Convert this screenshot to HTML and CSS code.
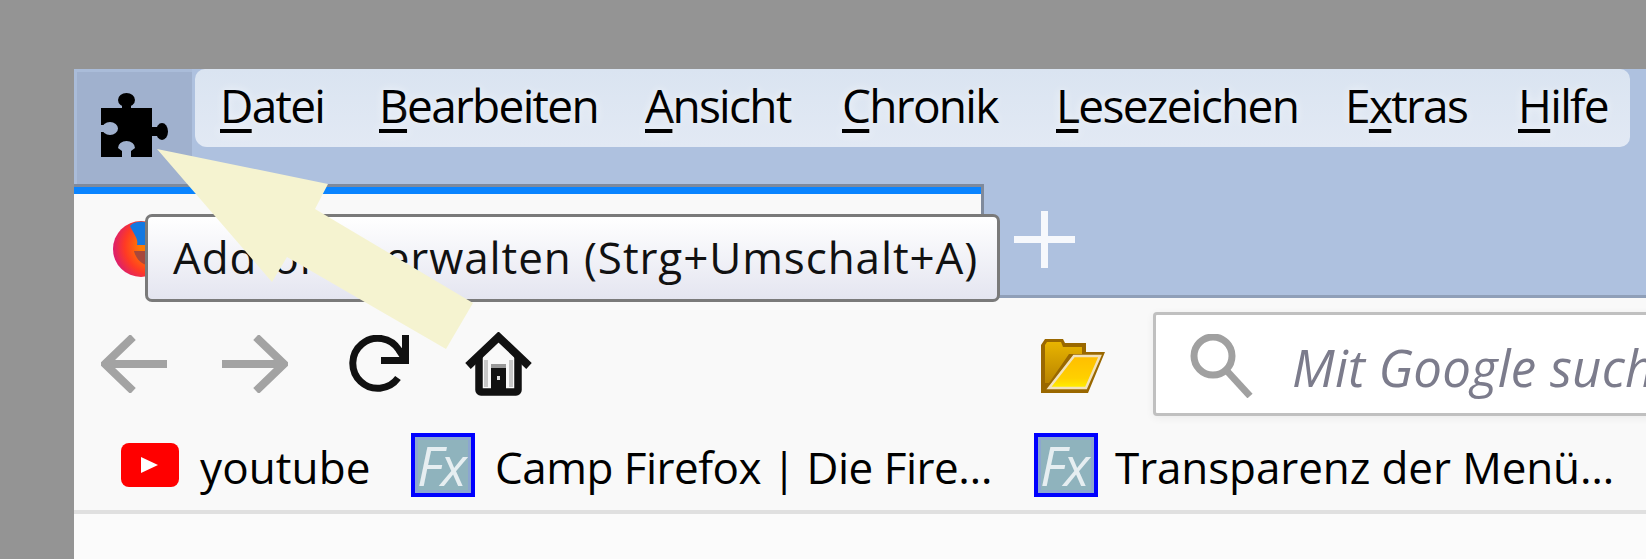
FILE: index.html
```html
<!DOCTYPE html>
<html lang="de">
<head>
  <meta charset="UTF-8" />
  <title>Add-ons verwalten</title>
  <link rel="stylesheet" href="styles.css">
</head>
<body>
  <div class="browser">
    <div class="titlebar">
      <div class="menu-row">
        <div class="addon-box">
          <svg class="puzzle" viewBox="0 0 67 64">
            <rect y="15" width="51" height="49" fill="#000"/>
            <ellipse cx="25.500" cy="7" rx="8.500" ry="7" fill="#000"/>
            <rect x="21" y="10" width="9" height="8" fill="#000"/>
            <ellipse cx="61" cy="38.500" rx="6" ry="8.500" fill="#000"/>
            <rect x="50" y="34" width="8" height="9" fill="#000"/>
            <ellipse cx="9" cy="35.500" rx="8" ry="6.500" fill="#a0b1ce"/>
            <rect y="32" width="6" height="7" fill="#a0b1ce"/>
            <path d="M17 55 A8.500 7 0 0 1 34 55 L30 58 V64 H21 V58 Z" fill="#a0b1ce"/>
          </svg>
        </div>
        <div class="menu-bar">
          <span class="menu-item"><u>D</u>atei</span>
          <span class="menu-item"><u>B</u>earbeiten</span>
          <span class="menu-item"><u>A</u>nsicht</span>
          <span class="menu-item"><u>C</u>hronik</span>
          <span class="menu-item"><u>L</u>esezeichen</span>
          <span class="menu-item">E<u>x</u>tras</span>
          <span class="menu-item"><u>H</u>ilfe</span>
        </div>
      </div>
      <div class="tab-row">
        <div class="tab">
          <div class="tab-line"></div>
          <div class="tab-body">
            <svg class="tab-icon" viewBox="0 0 60 56">
              <defs>
                <radialGradient id="foxFill" cx="0.7" cy="0.45" r="0.7">
                  <stop offset="0.3" stop-color="#ff7a00"/>
                  <stop offset="0.7" stop-color="#ff3a24"/>
                  <stop offset="1" stop-color="#dc1f6e"/>
                </radialGradient>
              </defs>
              <circle cx="29" cy="28" r="28" fill="url(#foxFill)"/>
              <path d="M18 5 C22 0 30 0 36 2 V24 H25 C27 18 21 12 18 5 Z" fill="#1478e0"/>
              <path d="M22 30 H36 V44 C30 44 24 38 22 30 Z" fill="#a8483c"/>
            </svg>
          </div>
        </div>
        <svg class="new-tab" viewBox="0 0 61 57">
          <path d="M30.500 0 V57 M0 28.500 H61" stroke="#f6f8fc" stroke-width="7" fill="none"/>
        </svg>
      </div>
    </div>

    <div class="toolbar">
      <svg class="nav-icon" viewBox="0 0 66 58">
        <path d="M32 2 L4 29 L32 56 M4 29 H66" stroke="#a3a3a3" stroke-width="8" fill="none"/>
      </svg>
      <svg class="nav-icon forward" viewBox="0 0 66 58">
        <path d="M34 2 L62 29 L34 56 M62 29 H0" stroke="#a3a3a3" stroke-width="8" fill="none"/>
      </svg>
      <svg class="nav-icon reload" viewBox="0 0 65 58">
        <path d="M51 43 A25 25 0 1 1 52 15 L58 24" stroke="#111" stroke-width="7" fill="none"/>
        <path d="M62 0 V29 H34 V22 H55 V0 Z" fill="#111"/>
      </svg>
      <svg class="nav-icon home" viewBox="0 0 67 64">
        <path d="M3 34 L33.500 5 L64 34" stroke="#111" stroke-width="8" fill="none"/>
        <path d="M14 24 V58 A2 2 0 0 0 16 60 H51 A2 2 0 0 0 53 58 V24" stroke="#111" stroke-width="7.500" fill="none"/>
        <path d="M19 28 H23 V55 H19 Z M44 28 H48 V55 H44 Z" fill="#c8c8c8"/>
        <path d="M26 32 H41 V36 H26 Z" fill="#999"/>
        <path d="M26 36 H41 V60 H26 Z" fill="#111"/>
        <rect x="32" y="44" width="3" height="4" fill="#ddd"/>
      </svg>
      <svg class="folder" viewBox="0 0 64 54">
        <defs>
          <linearGradient id="folderBack" x1="0" y1="0" x2="0" y2="1">
            <stop offset="0" stop-color="#e8b400"/>
            <stop offset="1" stop-color="#b98400"/>
          </linearGradient>
          <linearGradient id="folderFront" x1="0" y1="0" x2="0" y2="1">
            <stop offset="0" stop-color="#ffbe00"/>
            <stop offset="0.7" stop-color="#ffd000"/>
            <stop offset="1" stop-color="#fff000"/>
          </linearGradient>
        </defs>
        <path d="M0 6 L4 0 H22 L24 4 H45 V13 H64 L47 54 H0 Z" fill="#9a6800"/>
        <path d="M4 6 L6 3 H20 L22 8 H41 V15 H28 L8 44 H4 Z" fill="url(#folderBack)"/>
        <path d="M33 17 H59 L45 49 H8 Z" fill="url(#folderFront)" stroke="#f2e2bc" stroke-width="2.500"/>
      </svg>
      <div class="search-box">
        <svg class="search-icon" viewBox="0 0 65 64">
          <circle cx="25" cy="22" r="19" stroke="#a0a0a0" stroke-width="7" fill="none"/>
          <path d="M39 37 L62 62" stroke="#a0a0a0" stroke-width="7" fill="none"/>
        </svg>
        <span class="search-text">Mit Google suchen</span>
      </div>
    </div>

    <div class="bookmarks">
      <div class="bookmark first">
        <svg class="yt-icon" viewBox="0 0 58 44">
          <rect width="58" height="44" rx="8" fill="#ff0000"/>
          <path d="M20 14 L37 22 L20 30 Z" fill="#fff"/>
        </svg>
        <span class="bookmark-label">youtube</span>
      </div>
      <div class="bookmark second">
        <div class="fx-icon">Fx</div>
        <span class="bookmark-label">Camp Firefox | Die Fire…</span>
      </div>
      <div class="bookmark third">
        <div class="fx-icon">Fx</div>
        <span class="bookmark-label">Transparenz der Menü…</span>
      </div>
    </div>
  </div>

  <div class="tooltip">Add-ons verwalten (Strg+Umschalt+A)</div>

  <!-- pointer drawn over the shot -->
  <svg class="pointer" viewBox="0 0 1646 559">
    <path d="M157 149 L328 184 L315 209 L473 303 L446 349 L287 257 L272 282 Z" fill="#f5f3d0"/>
  </svg>
</body>
</html>
```

FILE: styles.css
```css
* {
  margin: 0;
  padding: 0;
  box-sizing: border-box;
}

html, body {
  height: 100%;
  overflow: hidden;
}

body {
  background: #949494;
  padding: 69px 0 0 74px;
  font-family: "Open Sans", "Noto Sans", sans-serif;
  color: #000;
  position: relative;
}

svg {
  display: block;
}

.browser {
  height: 100%;
  background: #fbfbfb;
  display: flex;
  flex-direction: column;
}

/* title bar */
.titlebar {
  background: #aec1df;
  border-bottom: 3px solid #8f9fb8;
}

.menu-row {
  display: flex;
  height: 115px;
  align-items: flex-start;
}

.addon-box {
  flex: none;
  width: 118px;
  height: 115px;
  background: #a0b1ce;
  border-left: 3px solid #aabcd9;
  border-top: 3px solid #aabcd9;
  padding: 21px 0 0 24px;
}

.puzzle {
  width: 67px;
  height: 64px;
  filter: blur(0.4px);
}

.menu-bar {
  flex: 1;
  height: 78px;
  margin: 0 16px 0 3px;
  padding-left: 25px;
  display: grid;
  grid-template-columns: 159px 266px 197px 214px 289px 173px auto;
  background: linear-gradient(#dae4f1, #e2e9f4);
  border-radius: 10px 10px 10px 12px;
  font-size: 46px;
  letter-spacing: -1.7px;
  line-height: 72px;
}

.menu-item {
  text-shadow: 0 0 10px rgba(255, 255, 255, 0.7);
}

.menu-item u {
  text-decoration-thickness: 4px;
  text-underline-offset: 6px;
}

.tab-row {
  height: 111px;
  display: flex;
}

.tab {
  width: 910px;
  height: 114px;
  background: #f9f9f9;
  border-top: 3px solid #7f8a9c;
  border-right: 3px solid #7f8a9c;
  position: relative;
}

.tab-line {
  height: 7px;
  background: #0a84ff;
}

.tab-body {
  padding: 27px 0 0 38px;
}

.tab-icon {
  width: 60px;
  height: 56px;
  filter: blur(0.5px);
}

.new-tab {
  width: 61px;
  height: 57px;
  margin: 27px 0 0 30px;
  filter: blur(0.6px);
}

/* toolbar */
.toolbar {
  background: #f9f9f9;
  height: 128px;
  padding: 14px 0 10px 27px;
  display: flex;
  align-items: center;
}

.nav-icon {
  width: 66px;
  height: 58px;
  flex: none;
  filter: blur(0.6px);
}

.forward {
  margin-left: 55px;
}

.reload {
  width: 65px;
  margin-left: 59px;
}

.home {
  width: 67px;
  height: 64px;
  margin-left: 53px;
}

.folder {
  width: 64px;
  height: 54px;
  flex: none;
  margin: 4px 0 0 509px;
  filter: blur(0.5px);
}

.search-box {
  flex: 1;
  height: 104px;
  margin: 0 -8px 0 48px;
  padding-left: 32px;
  background: #fff;
  border: 3px solid #c0c0c0;
  border-radius: 4px;
  box-shadow: 0 2px 8px rgba(0, 0, 0, 0.06);
  display: flex;
  align-items: center;
  gap: 39px;
  overflow: hidden;
}

.search-icon {
  width: 65px;
  height: 64px;
  flex: none;
  margin-top: 3px;
  filter: blur(0.5px);
}

.search-text {
  font-size: 51px;
  font-style: italic;
  color: #7c7c8c;
  white-space: nowrap;
  margin-top: 5px;
  letter-spacing: 0.2px;
}

/* bookmarks */
.bookmarks {
  background: #f9f9f9;
  height: 88px;
  padding: 7px 0 0 47px;
  border-bottom: 4px solid #e0e0e0;
  display: flex;
  font-size: 44px;
  letter-spacing: -0.5px;
}

.bookmark {
  flex: none;
  display: flex;
  align-items: center;
  height: 64px;
  white-space: nowrap;
}

.bookmark-label {
  margin-top: 3px;
}

.first {
  width: 290px;
  gap: 21px;
  letter-spacing: 0.1px;
}

.second {
  width: 623px;
  gap: 20px;
}

.third {
  gap: 17px;
  letter-spacing: -0.1px;
}

.yt-icon {
  width: 58px;
  height: 44px;
  filter: blur(0.5px);
}

.fx-icon {
  width: 64px;
  height: 64px;
  background: #8fb3bd;
  border: 4px solid #0000ff;
  box-shadow: inset 0 0 0 3px #8ca6d0;
  color: rgba(255, 255, 255, 0.78);
  font-size: 54px;
  font-style: italic;
  line-height: 56px;
  letter-spacing: -2px;
  padding-left: 2px;
}

/* tooltip and pointer sit over everything */
.tooltip {
  position: absolute;
  left: 145px;
  top: 214px;
  width: 855px;
  height: 88px;
  padding-left: 25px;
  background: linear-gradient(#ffffff, #e4e5f0);
  border: 3px solid #7a7a7a;
  border-radius: 7px;
  color: #111;
  font-size: 44px;
  letter-spacing: 0.9px;
  line-height: 80px;
  white-space: nowrap;
}

.pointer {
  position: absolute;
  left: 0;
  top: 0;
  width: 1646px;
  height: 559px;
}
```
